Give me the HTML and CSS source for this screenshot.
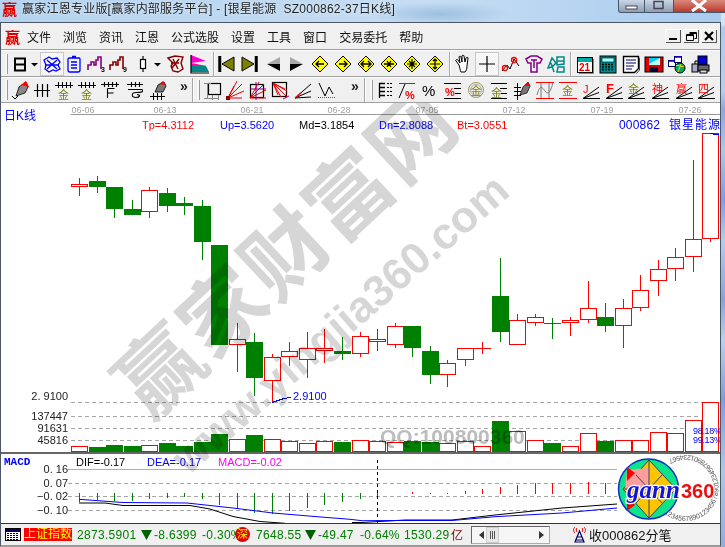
FILE: index.html
```html
<!DOCTYPE html>
<html lang="zh">
<head>
<meta charset="utf-8">
<title>赢家江恩专业版</title>
<link rel="stylesheet" href="styles.css">
</head>
<body>
<div class="titlebar">
  <span class="applogo">赢</span>
  <span class="title">赢家江恩专业版[赢家内部服务平台] - [银星能源  SZ000862-37日K线]</span>
  <div class="winbtns">
    <span class="wb"><svg width="27" height="13"><rect x="8" y="6" width="11" height="3" fill="#fff" stroke="#445"/></svg></span>
    <span class="wb"><svg width="29" height="13"><rect x="10" y="1.500" width="9" height="7" fill="none" stroke="#445" stroke-width="1.500"/></svg></span>
    <span class="wb close"><svg width="51" height="13"><path d="M19 0l7 6 7-6M19 11l7-5 7 5" fill="none" stroke="#fff" stroke-width="3"/></svg></span>
  </div>
</div>
<div class="frame">
  <div class="menu">
    <span class="menulogo">赢</span>
    <span>文件</span><span>浏览</span><span>资讯</span><span>江恩</span><span>公式选股</span><span>设置</span><span>工具</span><span>窗口</span><span>交易委托</span><span>帮助</span>
    <div class="mdi">
      <span class="mb"><svg width="16" height="14"><rect x="4" y="9" width="8" height="2"/></svg></span>
      <span class="mb"><svg width="16" height="14"><path d="M6.500 3.500h7v6h-2M3.500 5.500h7v6h-7zM3.500 6.500h7M6.500 4.500h7" fill="none" stroke="#000"/></svg></span>
      <span class="mb"><svg width="16" height="14"><path d="M4 3l8 8M12 3l-8 8" stroke="#000" stroke-width="2.200"/></svg></span>
    </div>
  </div>

  <div class="tb">
    <i class="grip m5"></i>
    <svg class="ic m2" viewBox="0 0 22 22"><path d="M6 5.500h10v12H6zM6 11.500h10" fill="none" stroke="#000" stroke-width="2"/></svg>
    <svg class="caret" viewBox="0 0 7 22"><path d="M0 10h7l-3.500 3.500z"/></svg>
    <svg class="ic m3 active" viewBox="0 0 22 22"><path d="M3 7l5-3 3 2 5-1 3 4-2 3 2 4-4 2-3-1-4 2-4-3 1-4zM6 7l10 9M16 7L6 16M4 12h14" fill="none" stroke="#00f" stroke-width="1.300"/></svg>
    <svg class="ic" viewBox="0 0 22 22"><path d="M6 5h10a1 1 0 011 1v11a2 2 0 01-2 2H7a2 2 0 01-2-2V6zM9 3.500h4M8 9h6M8 12h6M8 15h6" fill="none" stroke="#00f" stroke-width="1.300"/></svg>
    <svg class="ic" viewBox="0 0 22 22"><path d="M3 17v-5h3v-3h3v3h2V7h2V4h3v12" fill="none" stroke="#800080" stroke-width="1.600"/><text x="16" y="19" class="mini">3</text></svg>
    <svg class="ic" viewBox="0 0 22 22"><path d="M3 17v-5h3v-3h3v3h2V7h2V4h3v12" fill="none" stroke="#800000" stroke-width="1.600"/><text x="16" y="19" class="mini">9</text></svg>
    <svg class="ic m3" viewBox="0 0 22 22"><path d="M11 3v16" stroke="#000" stroke-width="1.200"/><rect x="8.500" y="6.500" width="5" height="9" fill="#fff" stroke="#000" stroke-width="1.200"/></svg>
    <svg class="caret" viewBox="0 0 7 22"><path d="M0 10h7l-3.500 3.500z"/></svg>
    <svg class="ic m3" viewBox="0 0 22 22"><path d="M4 5l7-2 8 1-2 6 2 6-5 3-5-1-2-5 2-3zM9 6l5 10M15 6L8 15M7 10h8" fill="none" stroke="#800000" stroke-width="1.400"/></svg>
    <svg class="ic m2" viewBox="0 0 22 22"><path d="M3 2l15 6-15 2z" fill="#f0c"/><path d="M3 10l16 3H3z" fill="#f0a"/><path d="M3 13h15l3 6H3z" fill="#088"/><path d="M3 2v18h18" fill="none" stroke="#000" stroke-width="1.200"/></svg>
    <i class="sep m3"></i>
    <svg class="ic m1" viewBox="0 0 22 22"><path d="M3 3v16M4.500 3v16" stroke="#000" stroke-width="1.500"/><path d="M18 4v14L6 11z" fill="#808000" stroke="#000"/></svg>
    <svg class="ic" viewBox="0 0 22 22"><path d="M19 3v16M17.500 3v16" stroke="#000" stroke-width="1.500"/><path d="M4 4v14l12-7z" fill="#808000" stroke="#000"/></svg>
    <svg class="ic m3" viewBox="0 0 22 22"><path d="M17 4v7H4z" fill="#aaa"/><path d="M17 18v-7H4z"/></svg>
    <svg class="ic" viewBox="0 0 22 22"><path d="M5 4v7h13z" fill="#aaa"/><path d="M5 18v-7h13z"/></svg>
    <svg class="ic m2" viewBox="0 0 22 22"><path d="M11 3l8 8-8 8-8-8z" fill="#ff0" stroke="#000"/><path d="M15 11H7M10 8l-3 3 3 3" fill="none" stroke="#000" stroke-width="1.300"/></svg>
    <svg class="ic m1" viewBox="0 0 22 22"><path d="M11 3l8 8-8 8-8-8z" fill="#ff0" stroke="#000"/><path d="M7 11h8M12 8l3 3-3 3" fill="none" stroke="#000" stroke-width="1.300"/></svg>
    <svg class="ic m1" viewBox="0 0 22 22"><path d="M11 3l8 8-8 8-8-8z" fill="#ff0" stroke="#000"/><path d="M6 11h10M9 8l-3 3 3 3M13 8l3 3-3 3" fill="none" stroke="#000" stroke-width="1.300"/></svg>
    <svg class="ic m1" viewBox="0 0 22 22"><path d="M11 3l8 8-8 8-8-8z" fill="#ff0" stroke="#000"/><path d="M6 11h10M9 8l2 3-2 3M13 8l-2 3 2 3" fill="none" stroke="#000" stroke-width="1.300"/></svg>
    <svg class="ic m1" viewBox="0 0 22 22"><path d="M11 3l8 8-8 8-8-8z" fill="#ff0" stroke="#000"/><path d="M6 11h10M11 6v10M8 8l6 6M14 8l-6 6" fill="none" stroke="#000" stroke-width="1.200"/></svg>
    <svg class="ic m1" viewBox="0 0 22 22"><path d="M11 3l8 8-8 8-8-8z" fill="#ff0" stroke="#000"/><path d="M6 11h10M11 6v10M9 8l2-2 2 2M9 14l2 2 2-2" fill="none" stroke="#000" stroke-width="1.200"/></svg>
    <i class="sep m3"></i>
    <svg class="ic m1" viewBox="0 0 22 22"><path d="M7 12L4 8c-1-1 1-2 2-1l2 3-1-6c0-1 2-1 2 0l1 5V3c0-1 2-1 2 0l1 6 1-4c0-1 2-1 2 0l-1 8c0 3-1 5-2 6H9c-1-2-1-4-2-7z" fill="#fff" stroke="#000"/></svg>
    <svg class="ic m2 active" viewBox="0 0 22 22"><path d="M11 3v16M3 11h16" stroke="#000" stroke-width="1.200"/></svg>
    <svg class="ic m1" viewBox="0 0 22 22"><path d="M3 18l5-6 3 4 4-10 5 7" fill="none" stroke="#000"/><circle cx="6" cy="15" r="2.500" fill="none" stroke="#f00" stroke-width="1.300"/><circle cx="15" cy="7" r="2.500" fill="none" stroke="#f00" stroke-width="1.300"/></svg>
    <svg class="ic m2" viewBox="0 0 22 22"><path d="M3 6l5-3h6l5 3-2 4h-3v9H8v-9H5zM8 7h6M11 7v8" fill="none" stroke="#800080" stroke-width="1.500"/></svg>
    <svg class="ic" viewBox="0 0 22 22"><path d="M3 15l4-10 4 5-4 4zM12 4h7v7l-7 1zM12 8h7M13 14h6v5h-7zM6 10l3 9" fill="none" stroke="#088" stroke-width="1.500"/></svg>
    <i class="sep m3"></i>
    <svg class="ic m2" viewBox="0 0 22 22"><rect x="3.500" y="4.500" width="15" height="15" fill="#fff" stroke="#000"/><rect x="4" y="5" width="14" height="4" fill="#0aa"/><path d="M19.500 6v14.500H5" fill="none" stroke="#888"/><text x="5" y="18" class="cal">21</text></svg>
    <svg class="ic m1" viewBox="0 0 22 22"><rect x="3" y="3" width="16" height="17" fill="#088" stroke="#000"/><rect x="5" y="5" width="12" height="4" fill="#9ff" stroke="#000" stroke-width=".6"/><path d="M5 11.500h12M5 14h12M5 16.500h12" stroke="#000" stroke-dasharray="2 1" stroke-width="1.500"/></svg>
    <svg class="ic m1" viewBox="0 0 22 22"><path d="M3.500 3.500h15v12l-4 4h-11z" fill="#fff" stroke="#000" stroke-width="1.400"/><path d="M6 7h10M6 10h10M6 13h8M6 16h6" stroke="#006" /><path d="M19.500 5v12l-3 3.500" fill="none" stroke="#444"/></svg>
    <svg class="ic m1" viewBox="0 0 22 22"><rect x="2" y="4" width="18" height="15" fill="#d00" stroke="#000"/><rect x="6" y="5" width="11" height="7" fill="#0cf"/><path d="M6 11l11-6v7H6z" fill="#bfe"/><rect x="6" y="14" width="9" height="5" fill="#003" /></svg>
    <svg class="ic m1" viewBox="0 0 22 22"><rect x="2.500" y="7.500" width="7" height="6" fill="#fff" stroke="#006"/><rect x="8.500" y="3.500" width="7" height="6" fill="#fff" stroke="#006"/><path d="M3 8h6M9 4h6" stroke="#00c" stroke-width="1.600"/><circle cx="14" cy="15" r="5" fill="#0a6" stroke="#000"/><path d="M10 13c3-2 5 2 8 0M12 19l3-8" stroke="#fc0" fill="none"/></svg>
    <svg class="ic m1" viewBox="0 0 22 22"><rect x="9" y="3" width="9" height="9" fill="#00c" stroke="#000"/><path d="M6 8h3v10H6z" fill="#ccc" stroke="#000"/><rect x="3" y="11" width="6" height="8" fill="#aac" stroke="#000"/><rect x="9" y="12" width="11" height="6" fill="#666" stroke="#000"/><rect x="11" y="17" width="7" height="3" fill="#ddd" stroke="#000"/></svg>
  </div>

  <div class="tb tb2">
    <i class="grip m5"></i>
    <svg class="ic m2" viewBox="0 0 22 22"><path d="M7 17l3-9 7-5 2 5-3 6z" fill="#888" stroke="#000" stroke-width=".8"/><path d="M12 6l5-4 3 6z" fill="#f00"/><path d="M3 17l3 3 3-3" fill="none" stroke="#000"/></svg>
    <svg class="ic" viewBox="0 0 22 22"><path d="M6.500 5v13M11.500 5v13M16.500 5v13M3 11.500h16" stroke="#000" stroke-width="1.200"/></svg>
    <svg class="ic" viewBox="0 0 22 22"><path d="M2 6.500h18M5.500 3v6M9.500 3v6M13.500 3v6M17.500 3v6" stroke="#000"/><text x="5" y="20" class="gold">金</text></svg>
    <svg class="ic m1" viewBox="0 0 22 22"><path d="M2 6.500h18M5.500 3v6M9.500 3v6M13.500 3v6M17.500 3v6" stroke="#000"/><text x="5" y="20" class="gold">金</text></svg>
    <svg class="ic m1" viewBox="0 0 22 22"><path d="M2 5.500h18M5.500 3v5M9.500 3v5M13.500 3v5M17.500 3v5M8.500 9.500h7M8.500 9.500V19M8.500 14h6" fill="none" stroke="#000" stroke-width="1.100"/></svg>
    <svg class="ic m3" viewBox="0 0 22 22"><path d="M3 5.500h16M7.500 3v5M11.500 3v5M15.500 3v5M4 10.500h14c2 3-2 3-6 3-5 0-5 5 0 5 4 0 5-3 1-3" fill="none" stroke="#000" stroke-width="1.100"/></svg>
    <svg class="ic m1" viewBox="0 0 22 22"><path d="M8 13l3-7 6-3 2 4-3 6z" fill="#777" stroke="#000" stroke-width=".8"/><path d="M12 5l4-3 3 4z" fill="#f00"/><path d="M3 17.500h15M6.500 14v7M10.500 14v7M14.500 14v7" stroke="#000"/></svg>
    <span class="more m9">»</span>
    <i class="sep m2"></i>
    <i class="grip m3"></i>
    <svg class="ic m3" viewBox="0 0 22 22"><rect x="6.500" y="4.500" width="12" height="11" fill="none" stroke="#000" stroke-width="1.200"/><path d="M2 4.500h7M5.500 4.500v15M2 19.500h15M10.500 16v5M16.500 16v5" stroke="#888" fill="none"/></svg>
    <svg class="ic" viewBox="0 0 22 22"><path d="M4 19L18 5M4 19l9-17M4 19l16-7M4 19l6-12M4 19l14 0" stroke="#e00" fill="none"/><rect x="2" y="17" width="4" height="4" fill="#800"/></svg>
    <svg class="ic" viewBox="0 0 22 22"><rect x="4.500" y="5.500" width="13" height="13" fill="none" stroke="#000" stroke-width="1.200"/><path d="M4 19L18 5M4 19l9-16M4 19l16-8M4 19h16" stroke="#e00" fill="none"/><path d="M10 3v18M4 10h16" stroke="#808" fill="none"/></svg>
    <svg class="ic m1" viewBox="0 0 22 22"><rect x="3.500" y="3.500" width="14" height="14" fill="none" stroke="#000" stroke-width="1.200"/><path d="M4 4l14 14M4 4l8 14M4 4l14 8M4 4l12 6M4 4l5 12" stroke="#e00" fill="none"/><path d="M14 20l6-3" stroke="#808"/></svg>
    <svg class="ic m1" viewBox="0 0 22 22"><path d="M3 19L19 5M3 19l16-7M3 19l16-1" fill="none" stroke="#000"/><path d="M3 19l6-5" stroke="#f00" stroke-width="1.500"/></svg>
    <svg class="ic m1" viewBox="0 0 22 22"><path d="M4 4l6 13 4-9 4 7" fill="none" stroke="#000"/><path d="M3 18.500h17" stroke="#666" stroke-dasharray="1 1"/></svg>
    <span class="more m12">»</span>
    <i class="sep m3"></i>
    <i class="grip m4"></i>
    <svg class="ic m2" viewBox="0 0 22 22"><path d="M5.500 4v15M5 4.500h6M5 8.500h6M5 12.500h6M5 16.500h6" stroke="#000" stroke-width="1.300"/><path d="M13 4.500h6M13 8.500h6M13 12.500h6M13 16.500h6" stroke="#000" stroke-dasharray="2 1"/></svg>
    <svg class="ic" viewBox="0 0 22 22"><path d="M3 4.500h16M3 19l6-14" stroke="#000" fill="none"/><path d="M3 4.500h16" stroke="#f00"/><text x="9" y="20" class="redpct">%</text></svg>
    <svg class="ic m1" viewBox="0 0 22 22"><text x="3" y="17" class="pct">%</text></svg>
    <svg class="ic m1" viewBox="0 0 22 22"><path d="M2 4.500h17M12 9.500h7M13 14.500h6M2 19.500h17" stroke="#000"/><text x="3" y="17" class="redpct">%</text></svg>
    <svg class="ic m1" viewBox="0 0 22 22"><circle cx="11" cy="11" r="7.500" fill="#eee" stroke="#996"/><circle cx="11" cy="11" r="5.500" fill="none" stroke="#aaa"/><text x="5.500" y="15.500" class="gold">金</text></svg>
    <svg class="ic m1" viewBox="0 0 22 22"><path d="M3 4.500h16M12 9.500h7M13 14.500h6M3 19.500h16" stroke="#000"/><text x="3" y="18" class="gold">金</text></svg>
    <svg class="ic m1" viewBox="0 0 22 22"><path d="M6.500 4v17M3 8.500h7M3 12.500h7M3 16.500h7" stroke="#000"/><path d="M9 16l3-8 5-5 2 4-3 7z" fill="#777" stroke="#000" stroke-width=".7"/><path d="M13 7l4-4 2 4z" fill="#f00"/></svg>
    <svg class="ic m1" viewBox="0 0 22 22"><path d="M2 3.500h18M2 19.500h18" stroke="#f00"/><path d="M3 16c3-11 5-8 8-4s5 2 8-8M7 4v15M15 4v15" fill="none" stroke="#777"/></svg>
    <svg class="ic m1" viewBox="0 0 22 22"><path d="M2 3.500h18M2 19.500h18" stroke="#f00"/><text x="5" y="16" class="gold">金</text></svg>
    <svg class="ic m1" viewBox="0 0 22 22"><path d="M3 19.500h17M3 19.500L19 8M3 19.500l16-6" stroke="#000" fill="none"/><text x="3" y="14" class="rtext">J</text></svg>
    <svg class="ic m1" viewBox="0 0 22 22"><path d="M3 19.500h17M3 19.500L19 8M3 19.500l16-6" stroke="#000" fill="none"/><text x="3" y="14" class="rtext b">F</text></svg>
    <svg class="ic" viewBox="0 0 22 22"><path d="M3 19.500h17M3 19.500L19 8M3 19.500l16-6" stroke="#000" fill="none"/><text x="3" y="14" class="gold">金</text></svg>
    <svg class="ic m2" viewBox="0 0 22 22"><path d="M3 19.500h17M3 19.500L19 8M3 19.500l16-6" stroke="#000" fill="none"/><text x="3" y="14" class="rtext">神</text></svg>
    <svg class="ic m2" viewBox="0 0 22 22"><path d="M3 19.500h17M3 19.500L19 8M3 19.500l16-6" stroke="#000" fill="none"/><text x="3" y="14" class="rtext">赢</text></svg>
    <svg class="ic" viewBox="0 0 22 22"><path d="M3 19.500h17M3 19.500L19 8M3 19.500l16-6" stroke="#000" fill="none"/><text x="3" y="14" class="rtext">四</text></svg>
  </div>

  <svg class="chart" viewBox="1 103 719 420" width="719" height="420">
    <text x="4" y="120" class="kline">日K线</text>
    <path d="M71 114.500H720" stroke="#999" class="crisp"/>
    <g class="dates">
      <text x="83" y="113">06-06</text><text x="165" y="113">06-13</text><text x="252" y="113">06-21</text><text x="339" y="113">06-28</text>
      <text x="427" y="113">07-05</text><text x="514" y="113">07-12</text><text x="602" y="113">07-19</text><text x="690" y="113">07-26</text>
    </g>
    <g class="stat">
      <text x="142" y="129" fill="#f00">Tp=4.3112</text>
      <text x="220" y="129" fill="#00f">Up=3.5620</text>
      <text x="299" y="129" fill="#000">Md=3.1854</text>
      <text x="379" y="129" fill="#00f">Dn=2.8088</text>
      <text x="457" y="129" fill="#f00">Bt=3.0551</text>
      <text x="619" y="129" fill="#00f" class="sp">000862</text>
      <text x="669" y="129" fill="#00f" class="sp1">银星能源</text>
    </g>

    <path class="crisp dash" d="M71 402.500H718M71 416.500H700M71 428.500H700M71 440.500H700"/>
    <g class="axis">
      <text x="68" y="400">2. 9100</text>
      <text x="68" y="420">137447</text>
      <text x="68" y="432">91631</text>
      <text x="68" y="444">45816</text>
      <text x="68" y="473">0. 16</text>
      <text x="68" y="487">0. 07</text>
      <text x="68" y="500">−0. 02</text>
      <text x="68" y="514">−0. 10</text>
    </g>

    <path class="crisp gw" d="M97.500 176V181M97.500 187V193M114.500 209V218M132.500 200V209M167.500 188V193M167.500 206V212M184.500 197V215M202.500 200V206M202.500 242V260M254.500 333V342M254.500 378V396M342.500 337V360M412.500 348V357M430.500 346V351M430.500 375V384M500.500 258V342M552.500 318V339M605.500 303V332M544 323.500H561"/>
    <path class="crisp rw" d="M79.500 178V196M149.500 187V218M237.500 323V372M272.500 354V402M289.500 342V366M307.500 332V378M324.500 329V363M360.500 332V357M377.500 329V351M395.500 323V348M447.500 360V387M465.500 348V366M482.500 342V354M474 348.500H491M517.500 314V320M535.500 314V326M570.500 317V336M588.500 281V323M623.500 299V348M640.500 275V311M658.500 260V296M675.500 248V281M693.500 160V272M710.500 238V242"/>

    <g class="gb crisp">
      <rect x="89" y="181" width="17" height="6"/><rect x="106" y="187" width="17" height="22"/><rect x="124" y="209" width="17" height="6"/>
      <rect x="159" y="193" width="17" height="13"/><rect x="176" y="203" width="17" height="3"/><rect x="194" y="206" width="17" height="36"/>
      <rect x="211" y="245" width="17" height="100"/><rect x="246" y="342" width="17" height="36"/><rect x="334" y="351" width="17" height="3"/>
      <rect x="404" y="326" width="17" height="22"/><rect x="422" y="351" width="17" height="24"/><rect x="492" y="296" width="17" height="36"/>
      <rect x="597" y="317" width="17" height="9"/>
    </g>
    <g class="rb crisp">
      <rect x="71.500" y="184.500" width="16" height="2"/><rect x="141.500" y="190.500" width="16" height="21"/><rect x="229.500" y="339.500" width="16" height="5"/>
      <rect x="264.500" y="357.500" width="16" height="23"/><rect x="281.500" y="351.500" width="16" height="5"/><rect x="299.500" y="348.500" width="16" height="11"/>
      <rect x="316.500" y="348.500" width="16" height="2"/><rect x="352.500" y="336.500" width="16" height="17"/><rect x="369.500" y="339.500" width="16" height="2"/>
      <rect x="387.500" y="326.500" width="16" height="18"/><rect x="439.500" y="363.500" width="16" height="11"/><rect x="457.500" y="348.500" width="16" height="11"/>
      <rect x="509.500" y="320.500" width="16" height="24"/><rect x="527.500" y="317.500" width="16" height="5"/><rect x="562.500" y="320.500" width="16" height="2"/>
      <rect x="580.500" y="308.500" width="16" height="11"/><rect x="615.500" y="308.500" width="16" height="17"/><rect x="632.500" y="290.500" width="16" height="17"/>
      <rect x="650.500" y="269.500" width="16" height="11"/><rect x="667.500" y="257.500" width="16" height="11"/><rect x="685.500" y="239.500" width="16" height="17"/>
      <rect x="702.500" y="133.500" width="16" height="105"/>
    </g>
    <path class="crisp bl" d="M710 133.500h4M713 134.500h6M272 402.500l6-2 6-2 7-1"/>
    <text x="293" y="400" class="low">2.9100</text>

    <g class="gb crisp">
      <rect x="89" y="447" width="17" height="5"/><rect x="106" y="445" width="17" height="7"/><rect x="124" y="446" width="17" height="6"/>
      <rect x="159" y="443" width="17" height="9"/><rect x="176" y="446" width="17" height="6"/><rect x="194" y="442" width="17" height="10"/>
      <rect x="211" y="434" width="17" height="18"/><rect x="246" y="435" width="17" height="17"/><rect x="334" y="442" width="17" height="10"/>
      <rect x="404" y="441" width="17" height="11"/><rect x="422" y="442" width="17" height="10"/><rect x="492" y="421" width="17" height="31"/>
      <rect x="544" y="443" width="17" height="9"/><rect x="597" y="441" width="17" height="11"/>
    </g>
    <g class="rb crisp">
      <rect x="71.500" y="446.500" width="16" height="5"/><rect x="141.500" y="445.500" width="16" height="6"/><rect x="229.500" y="439.500" width="16" height="12"/>
      <rect x="264.500" y="439.500" width="16" height="12"/><rect x="281.500" y="441.500" width="16" height="10"/><rect x="299.500" y="443.500" width="16" height="8"/>
      <rect x="316.500" y="441.500" width="16" height="10"/><rect x="352.500" y="440.500" width="16" height="11"/><rect x="369.500" y="441.500" width="16" height="10"/>
      <rect x="387.500" y="442.500" width="16" height="9"/><rect x="439.500" y="443.500" width="16" height="8"/><rect x="457.500" y="441.500" width="16" height="10"/>
      <rect x="474.500" y="446.500" width="16" height="5"/><rect x="509.500" y="431.500" width="16" height="20"/><rect x="527.500" y="440.500" width="16" height="11"/>
      <rect x="562.500" y="446.500" width="16" height="5"/><rect x="580.500" y="433.500" width="16" height="18"/><rect x="615.500" y="440.500" width="16" height="11"/>
      <rect x="632.500" y="440.500" width="16" height="11"/><rect x="650.500" y="432.500" width="16" height="19"/><rect x="667.500" y="433.500" width="16" height="18"/>
      <rect x="685.500" y="420.500" width="16" height="31"/><rect x="702.500" y="402.500" width="16" height="49"/>
    </g>
    <text x="693" y="434" class="pctl">98.18%</text>
    <text x="693" y="443" class="pctl">99.13%</text>

    <path class="crisp panelsep" d="M1 453H720"/>
    <text x="4" y="465" class="macd">MACD</text>
    <g class="stat">
      <text x="76" y="466" fill="#000">DIF=-0.17</text>
      <text x="147" y="466" fill="#00f">DEA=-0.17</text>
      <text x="218" y="466" fill="#f0f">MACD=-0.02</text>
    </g>
    <path class="crisp solidgrid" d="M68 469.500H617"/>
    <path class="crisp dash" d="M68 483.500H617M68 496.500H617M68 510.500H617"/>
    <path class="crisp gw" d="M79.500 493V502M97.500 493V500M114.500 493V501M132.500 493V501M149.500 493V499M167.500 493V498M184.500 493V497M202.500 493V499M219.500 493V505M237.500 493V509M254.500 493V513M272.500 493V514M289.500 493V511M307.500 493V508M324.500 493V505M342.500 493V502M360.500 493V499M377.500 493V496"/>
    <path class="crisp rw" d="M412.500 492V494M430.500 493V494M447.500 493V494M465.500 491V494M482.500 489V494M500.500 487V494M517.500 485V494M535.500 483V494M552.500 483V494M570.500 483V494M588.500 482V494M605.500 483V494"/>
    <path class="crisp vdash" d="M377.500 460V523"/>
    <path class="ml blk" d="M79 503H105L123 505.500 190 505.500 210 509 233 516.500 260 521.500 285 523.300M352 522.500H362L405 520H452L495 515 562 508 617 504"/>
    <path class="ml blu" d="M79 499.300L123 502.500 187 503 233 508 273 513 317 516.700 350 519.300 362 520.700 405 520.500H452L495 516.700 562 513 617 508"/>

    <g class="logo">
      <rect x="617" y="455" width="103" height="67" fill="#fff"/>
      <path id="numarc" d="M664 513A33 33 0 1 0 664 463" fill="none"/>
      <text class="arc"><textPath href="#numarc">1234567890123456789012345678901234567</textPath></text>
      <circle cx="648.500" cy="489" r="30" fill="#0de38b" stroke="#1030c0" stroke-width="1.500"/>
      <path d="M649 460l27 29-27 29-26-29z" fill="#ffc400" stroke="#2a4a60"/>
      <path d="M627 470l22-2v21h-24z" fill="#ff9c9c"/>
      <path d="M627 467l8 6-8 8zM627 511l8-6-8-8z" fill="#f00"/>
      <path d="M649 460v58M623 489h53M636 475l13 14 13-14M636 503l13-14 13 14" fill="none" stroke="#2a4a60"/>
      <text x="627" y="498" class="gann">gann</text>
      <text x="681" y="498" class="g360">360</text>
    </g>

    <g class="wm">
      <text transform="translate(307 275) rotate(-43)" class="wm1">赢家财富网</text>
      <text transform="translate(350 335) rotate(-41)" class="wm2">www.yingjia360.com</text>
      <text x="380" y="444" class="wm3">QQ:100800360</text>
    </g>
  </svg>

  <div class="status">
    <svg class="calic" viewBox="0 0 16 13"><rect x=".5" y=".5" width="15" height="12" fill="#fff" stroke="#000"/><rect x="1" y="1" width="14" height="3" fill="#006"/><path d="M2 5.500h12M2 7.500h12M2 9.500h12M2 11.500h12" stroke="#000" stroke-dasharray="2 1"/></svg>
    <span class="idx">上证指数</span>
    <span class="g n1">2873.5901</span>
    <svg class="tri t1" viewBox="0 0 11 10"><path d="M0 0h11L5.500 10z"/></svg>
    <span class="g n2">-8.6399</span>
    <span class="g n3">-0.30%</span>
    <span class="shen">深</span>
    <span class="g n4">7648.55</span>
    <svg class="tri t2" viewBox="0 0 11 10"><path d="M0 0h11L5.500 10z"/></svg>
    <span class="g n5">-49.47</span>
    <span class="g n6">-0.64%</span>
    <span class="g n7">1530.29</span><span class="yi">亿</span>
    <div class="scroll">
      <svg width="79" height="16"><path d="M7 8l5-4v8z" fill="#333"/><rect x="14.500" y=".5" width="12" height="15" fill="#e8e8e8" stroke="#ccc"/><path d="M18.500 4v8M20.500 4v8M22.500 4v8" stroke="#555"/><path d="M72 8l-5-4v8z" fill="#333"/></svg>
    </div>
    <svg class="ant" viewBox="0 0 15 17"><path d="M7.500 5L3 16h9zM5 11h5M4 14h7" fill="none" stroke="#006" stroke-width="1.200"/><path d="M3 1c-2 2-2 4 0 6M12 1c2 2 2 4 0 6M5 2c-1 1-1 3 0 4M10 2c1 1 1 3 0 4" fill="none" stroke="#e00"/></svg>
    <span class="recv">收000862分笔</span>
  </div>
</div>
</body>
</html>
```

FILE: styles.css
```css
* { box-sizing: border-box; }
html, body { margin: 0; padding: 0; }
body {
  width: 725px;
  height: 547px;
  overflow: hidden;
  font-family: "Liberation Sans", "Noto Sans CJK SC", sans-serif;
  font-size: 12px;
  background:
    linear-gradient(#d6e4f2 0, #d6e4f2 24px, #a8cbf0 28px, #b4d0f0 90px, #8ba8de 110px, #a8c8ee 150px, #7f9ddc 200px, #b0ceee 240px, #86a4dc 300px, #b4d2f0 340px, #7f9ddc 400px, #a8c8ee 470px, #90aee0 547px) right top / 4px 100% no-repeat,
    radial-gradient(ellipse 70px 12px at 440px 14px, #9dbfe0, transparent),
    linear-gradient(90deg, #b5d3ef, #c6ddf3 60%, #a8cbee);
}
.titlebar { display: flex; align-items: flex-start; height: 22px; position: relative; }
.applogo { color: #e00000; font-size: 15px; font-weight: 700; width: 18px; margin-left: 2px; line-height: 20px; }
.title { margin-left: 2px; line-height: 19px; white-space: pre; letter-spacing: .23px; color: #222; text-shadow: 0 0 3px #eaf4ff; }
.winbtns { display: flex; margin-left: auto; height: 13px; }
.wb { display: block; height: 13px; background: linear-gradient(#c9d6e4, #8d9fb2); border: 1px solid #47566a; border-top: 0; border-left-width: 0; }
.wb:first-child { border-left-width: 1px; border-bottom-left-radius: 3px; width: 27px; }
.wb svg { display: block; margin: 0 0 0 -1px; }
.wb.close { background: linear-gradient(#d98a7c, #b8392c); border-right: 0; width: 51px; }

.frame {
  width: 721px;
  height: 525px;
  background: #f0f0f0;
  border: 1px solid #4c5564;
  border-bottom: 2px solid #9a9a9a;
  display: flex;
  flex-direction: column;
}
.menu { display: flex; align-items: center; gap: 12px; height: 27px; flex: none; padding-left: 26px; position: relative; color: #111; border-bottom: 1px solid #a0a0a0; }
.menulogo { position: absolute; left: 4px; top: 3px; color: #e00000; font-size: 15px; font-weight: 700; }
.mdi { display: flex; gap: 2px; margin-left: auto; margin-right: 3px; }
.mb { display: block; width: 16px; height: 14px; background: #f0f0f0; box-shadow: inset 1px 1px #fff, inset -1px -1px #555; }
.mb svg { display: block; }

.tb { display: flex; align-items: center; height: 27px; flex: none; border-top: 1px solid #fff; border-bottom: 1px solid #a0a0a0; }
.tb2 { height: 26px; }
.ic { width: 22px; height: 22px; flex: none; display: block; }
.caret { width: 7px; height: 22px; flex: none; display: block; }
.active { background: repeating-conic-gradient(#fff 0 25%, #f0f0f0 0 50%) 0 0 / 2px 2px; box-shadow: 0 0 0 1px #c8c8c8; }
.grip { display: block; flex: none; width: 2px; height: 20px; background: #f8f8f8; box-shadow: 1px 0 #999; }
.sep { display: block; flex: none; width: 2px; height: 24px; background: #a8a8a8; border-right: 1px solid #fff; }
.more { flex: none; width: 12px; font: 700 14px/14px "Liberation Sans", sans-serif; color: #222; text-align: center; margin-bottom: 8px; }
.m1 { margin-left: 1px; }
.m2 { margin-left: 2px; }
.m3 { margin-left: 3px; }
.m4 { margin-left: 4px; }
.m5 { margin-left: 4px; }
.m9 { margin-left: 9px; }
.m12 { margin-left: 12px; }
.mini { font-size: 7px; font-weight: 700; fill: #000; }
.cal { font-size: 10px; font-weight: 700; fill: #e00; }
.gold { font-size: 11px; fill: #808000; }
.pct { font-size: 15px; fill: #000; }
.redpct { font-size: 11px; font-weight: 700; fill: #f00; }
.rtext { font-size: 11px; fill: #f00; }
.rtext.b { font-weight: 700; font-size: 13px; }

.chart { display: block; flex: none; background: #fff; font-family: "Liberation Sans", "Noto Sans CJK SC", sans-serif; }
.crisp { shape-rendering: crispEdges; }
.kline { font-size: 12px; fill: #00f; }
.dates text { font-size: 9px; fill: #a0a0a0; text-anchor: middle; }
.stat text { font-size: 11px; }
.stat .sp { font-size: 12px; letter-spacing: .2px; }
.stat .sp1 { font-size: 12px; letter-spacing: 1px; }
.axis text { font-size: 11px; fill: #222; text-anchor: end; }
.dash { stroke: #a6a6a6; stroke-dasharray: 4 3; fill: none; }
.solidgrid { stroke: #b0b0b0; fill: none; }
.gw { stroke: #008000; fill: none; }
.rw { stroke: #f00; fill: none; }
.gb rect { fill: #008000; }
.rb rect { fill: #fff; stroke: #f00; }
.bl { stroke: #00f; fill: none; }
.low { font-size: 11px; fill: #00f; }
.pctl { font-size: 9px; letter-spacing: -.3px; fill: #00f; }
.panelsep { stroke: #666; stroke-width: 2; }
.macd { font: 700 11px "Liberation Mono", monospace; fill: #00f; }
.vdash { stroke: #000; stroke-dasharray: 3 3; }
.ml { fill: none; stroke-width: 1; }
.blk { stroke: #000; }
.blu { stroke: #00f; }
.arc { font-size: 7px; fill: #555; }
.gann { font: italic 700 25px "Liberation Serif", serif; fill: #1414d8; stroke: #fff; stroke-width: 2.5px; paint-order: stroke; }
.g360 { font: 700 20px "Liberation Sans", sans-serif; fill: #e81010; stroke: #fff; stroke-width: 2px; paint-order: stroke; }
.wm { mix-blend-mode: multiply; }
.wm1 { font-family: "Noto Sans CJK SC", sans-serif; font-size: 84px; font-weight: 700; fill: #d6d6d6; text-anchor: middle; letter-spacing: 2px; }
.wm2 { font-family: "Liberation Sans", sans-serif; font-size: 44px; font-weight: 700; fill: #d6d6d6; text-anchor: middle; }
.wm3 { font-family: "Liberation Sans", sans-serif; font-size: 21px; font-weight: 700; fill: #bcbcbc; }

.status { display: flex; align-items: center; flex: 1; position: relative; border-top: 1px solid #333; }
.calic { width: 16px; height: 13px; margin-left: 4px; flex: none; }
.idx { background: #f00; color: #ff0; width: 48px; height: 13px; line-height: 13px; margin-left: 3px; flex: none; overflow: hidden; }
.g { color: #008000; letter-spacing: .3px; flex: none; }
.n1 { margin-left: 5px; width: 64px; }
.tri { width: 11px; height: 10px; flex: none; fill: #006000; }
.n2 { margin-left: 2px; width: 48px; }
.n3 { width: 33px; overflow: hidden; white-space: nowrap; }
.shen { width: 15px; height: 15px; border-radius: 50%; background: #e00000; color: #ff0; font-size: 11px; line-height: 15px; text-align: center; flex: none; }
.n4 { margin-left: 6px; width: 49px; }
.n5 { margin-left: 2px; width: 42px; }
.n6 { width: 44px; }
.n7 { width: 47px; }
.yi { color: #800000; width: 20px; flex: none; }
.scroll { width: 79px; height: 18px; border: 1px solid #aaa; border-top-color: #666; border-left-color: #666; background: #f6f6f6; flex: none; }
.scroll svg { display: block; }
.ant { width: 15px; height: 17px; margin-left: 22px; flex: none; }
.recv { margin-left: 2px; font-size: 13px; color: #111; }
```
